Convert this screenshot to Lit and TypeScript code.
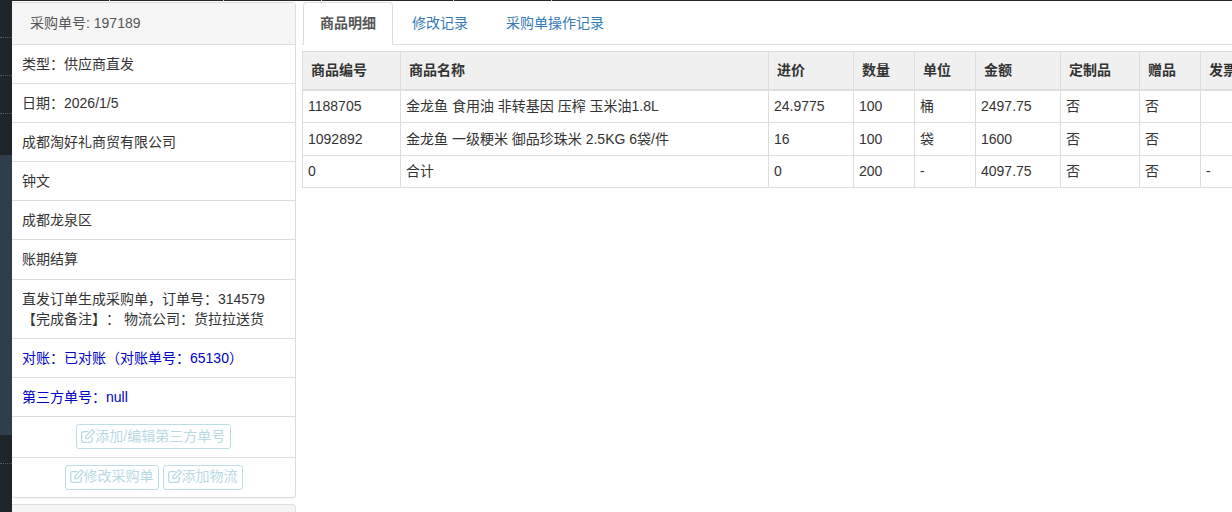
import { LitElement, html, css, svg } from "lit";
import { customElement } from "lit/decorators.js";

const editIcon = html`<svg class="icon" viewBox="0 0 14 14" width="14" height="14" fill="none" stroke="currentColor" stroke-width="1.3">
  ${svg`<path d="M11.2 8v3.6a1.7 1.7 0 0 1-1.7 1.7H2.4a1.7 1.7 0 0 1-1.7-1.7V4.4a1.7 1.7 0 0 1 1.7-1.7H7.6"/>
  <path d="M4.8 7.4 11.2.9 13.4 3.1 7 9.6H4.8z"/>`}
</svg>`;

const columns: [string, number][] = [
  ["商品编号", 98], ["商品名称", 368], ["进价", 85], ["数量", 61], ["单位", 61],
  ["金额", 85], ["定制品", 79], ["赠品", 61], ["发票", 100],
];
const rows = [
  ["1188705", "金龙鱼 食用油 非转基因 压榨 玉米油1.8L", "24.9775", "100", "桶", "2497.75", "否", "否", ""],
  ["1092892", "金龙鱼 一级粳米 御品珍珠米 2.5KG 6袋/件", "16", "100", "袋", "1600", "否", "否", ""],
  ["0", "合计", "0", "200", "-", "4097.75", "否", "否", "-"],
];
const tableWidth = columns.reduce((sum, [, w]) => sum + w, 0);
const stripWidths = [98, 114, 98, 132, 98];

@customElement("app-root")
export class AppRoot extends LitElement {
  static styles = css`
    :host {
      display: grid;
      grid-template-columns: 12px 1fr;
      width: 1232px;
      height: 512px;
      overflow: hidden;
      background: #fff;
      color: #333;
      font-family: "Liberation Sans", "Noto Sans CJK SC", sans-serif;
      font-size: 14px;
      line-height: 20.14px;
      text-spacing-trim: space-all;
    }
    .side { display: flex; flex-direction: column; background: #1f2429; }
    .side-dark { height: 155px; }
    .side-light { height: 280px; background: #2f3e4c; }
    .side-tail { flex: 1; }
    .dots { height: 38px; border-bottom: 1px dotted #565b60; box-sizing: border-box; }
    .dots.tail { height: 29px; }
    .main { display: flex; flex-direction: column; min-width: 0; }
    .strip { display: flex; height: 1px; background: #24262e; flex: none; }
    .strip span { box-sizing: border-box; border-right: 1px solid #d8d8d8; }
    .content { display: flex; flex: 1; min-height: 0; padding-top: 1px; gap: 6px; }
    .left { width: 284px; flex: none; display: flex; flex-direction: column; gap: 6px; }
    .panel {
      border: 1px solid #ddd;
      border-left: 0;
      border-radius: 0 4px 4px 4px;
      background: #fff;
      box-shadow: 0 1px 1px rgba(0, 0, 0, 0.05);
      flex: none;
    }
    .panel-head {
      height: 41.7px;
      box-sizing: border-box;
      padding: 10px 18px;
      background: #f5f5f5;
      color: #555;
      border-bottom: 1px solid #ddd;
    }
    .item { padding: 9px 10px; border-bottom: 1px solid #ddd; }
    .item.blue { color: #0000c8; }
    .item.btns {
      display: flex;
      justify-content: center;
      gap: 4px;
      padding: 7px 10px 7.5px;
    }
    .item.btns:last-child { border-bottom: 0; padding-bottom: 7px; }
    .btn {
      display: inline-flex;
      align-items: center;
      box-sizing: border-box;
      height: 25px;
      padding: 0 4px 2px;
      border: 1px solid #bcdde6;
      border-radius: 3px;
      color: #b7d9e4;
      background: #fff;
      font: inherit;
    }
    .btn.wide { padding-right: 4.5px; }
    .icon { flex: none; }
    .stub { height: 20px; border-top: 1px solid #ddd; border-right: 1px solid #ddd; border-radius: 0 4px 0 0; background: #f5f5f5; }
    .right { flex: 1; min-width: 0; overflow: hidden; }
    .tabs { display: flex; height: 42px; border-bottom: 1px solid #ddd; gap: 2px; padding-left: 1px; }
    .tab { padding: 11px 18px 0; color: #337ab7; }
    .tab.active {
      padding: 10px 16px 0;
      margin-bottom: -1px;
      color: #555;
      font-weight: bold;
      border: 1px solid #ddd;
      border-bottom-color: #fff;
      border-radius: 4px 4px 0 0;
      background: #fff;
      margin-right: -1px;
      width: 56px;
    }
    table {
      margin: 6px 0 0 0;
      border-collapse: collapse;
      table-layout: fixed;
      white-space: nowrap;
    }
    th, td { border: 1px solid #ddd; overflow: hidden; text-align: left; }
    th { padding: 8px 8px 8.5px; background: #f0f0f0; border-bottom-width: 2px; font-weight: bold; }
    td { padding: 5.7px 5px; }
  `;

  render() {
    return html`
      <div class="side">
        <div class="side-dark">
          <div class="dots"></div><div class="dots"></div><div class="dots"></div>
        </div>
        <div class="side-light"></div>
        <div class="side-tail"><div class="dots tail"></div></div>
      </div>
      <div class="main">
        <div class="strip">
          ${stripWidths.map((w) => html`<span style="width:${w}px"></span>`)}
        </div>
        <div class="content">
          <div class="left">
            <div class="panel">
              <div class="panel-head">采购单号: 197189</div>
              <div class="item">类型：供应商直发</div>
              <div class="item">日期：2026/1/5</div>
              <div class="item">成都淘好礼商贸有限公司</div>
              <div class="item">钟文</div>
              <div class="item">成都龙泉区</div>
              <div class="item">账期结算</div>
              <div class="item">直发订单生成采购单，订单号：314579<br />【完成备注】： 物流公司：货拉拉送货</div>
              <div class="item blue">对账：已对账（对账单号：65130）</div>
              <div class="item blue">第三方单号：null</div>
              <div class="item btns">
                <button class="btn wide">${editIcon}添加/编辑第三方单号</button>
              </div>
              <div class="item btns">
                <button class="btn">${editIcon}修改采购单</button>
                <button class="btn">${editIcon}添加物流</button>
              </div>
            </div>
            <div class="stub"></div>
          </div>
          <div class="right">
            <div class="tabs">
              <div class="tab active">商品明细</div>
              <div class="tab">修改记录</div>
              <div class="tab">采购单操作记录</div>
            </div>
            <table style="width:${tableWidth}px">
              <colgroup>
                ${columns.map(([, w]) => html`<col style="width:${w}px" />`)}
              </colgroup>
              <thead>
                <tr>${columns.map(([t]) => html`<th>${t}</th>`)}</tr>
              </thead>
              <tbody>
                ${rows.map((r) => html`<tr>${r.map((c) => html`<td>${c}</td>`)}</tr>`)}
              </tbody>
            </table>
          </div>
        </div>
      </div>
    `;
  }
}
